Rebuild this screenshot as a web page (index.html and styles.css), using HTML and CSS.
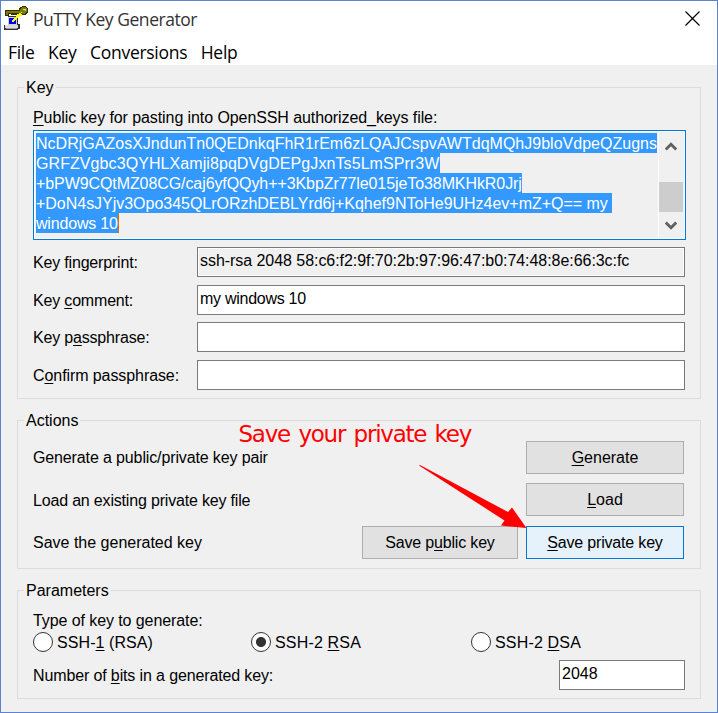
FILE: index.html
```html
<!DOCTYPE html>
<html lang="en">
<head>
<meta charset="utf-8">
<title>PuTTY Key Generator</title>
<link rel="stylesheet" href="styles.css">
</head>
<body>
<div class="window">
  <header class="titlebar">
    <svg class="app-icon" width="24" height="24" viewBox="0 0 24 24" shape-rendering="crispEdges">
      <path d="M1 4H15V2H16V1H18V0H22V1H23V2H24V7H23V8H22V9H18V8H13V9H7V8H5V10H1Z" fill="#303000"/>
      <path d="M2 5H16V3H17V2H18V1H22V2H23V6H22V7H21V8H18V7H4V9H2Z" fill="#7c7c00"/>
      <path d="M19 3H22V5H21V4H19Z" fill="#d8d8b0"/>
      <path d="M4 10H14V18H16V23H14V24H0V19H4Z" fill="#303030"/>
      <path d="M4 11H13V19H4Z" fill="#d0d0d0"/>
      <path d="M5 12H12V18H5Z" fill="#0000f0"/>
      <path d="M1 19H14V22H1Z" fill="#dcdcdc"/>
      <path d="M2 22H13V23H2Z" fill="#a0a0a0"/>
      <path d="M17 6H18V7H17V9H18V10H16V11H14V12H13V13H12V14H11V15H10V16H8V14H9V13H10V12H11V11H12V9H14V8H15V7H17Z" fill="#ff0"/>
    </svg>
    <span class="title">PuTTY Key Generator</span>
    <svg class="close" width="15" height="15" viewBox="0 0 15 15"><path d="M.5 .5L14.5 14.5M14.5 .5L.5 14.5" stroke="#000" stroke-width="1.2"/></svg>
  </header>
  <nav class="menu"><span>File</span><span>Key</span><span>Conversions</span><span>Help</span></nav>
  <main class="panel">
    <section class="group key-group">
      <h2 class="legend">Key</h2>
      <div class="label key-label snug"><u>P</u>ublic key for pasting into OpenSSH authorized_keys file:</div>
      <div class="textarea">
        <div class="lines">
          <div><span class="sel first">NcDRjGAZosXJndunTn0QEDnkqFhR1rEm6zLQAJCspvAWTdqMQhJ9bloVdpeQZugns</span></div>
          <div><span class="sel wide">GRFZVgbc3QYHLXamji8pqDVgDEPgJxnTs5LmSPrr3W</span></div>
          <div><span class="sel snug">+bPW9CQtMZ08CG/caj6yfQQyh++3KbpZr77le015jeTo38MKHkR0Jrj</span></div>
          <div><span class="sel fourth">+DoN4sJYjv3Opo345QLrORzhDEBLYrd6j+Kqhef9NToHe9UHz4ev+mZ+Q== my </span></div>
          <div><span class="sel caret tighter">windows 10</span></div>
        </div>
        <div class="scrollbar">
          <svg width="12" height="9" viewBox="0 0 12 9"><path d="M.8 7.5L6 2.3L11.2 7.5" fill="none" stroke="#606060" stroke-width="2.8"/></svg>
          <div class="thumb"></div>
          <svg width="12" height="9" viewBox="0 0 12 9"><path d="M.8 1.5L6 6.7L11.2 1.5" fill="none" stroke="#606060" stroke-width="2.8"/></svg>
        </div>
      </div>
      <div class="fields">
        <div class="label tighter">Key f<u>i</u>ngerprint:</div><div class="field readonly close-fit">ssh-rsa 2048 58:c6:f2:9f:70:2b:97:96:47:b0:74:48:8e:66:3c:fc</div>
        <div class="label tighter">Key <u>c</u>omment:</div><div class="field tightest">my windows 10</div>
        <div class="label tighter">Key p<u>a</u>ssphrase:</div><div class="field"></div>
        <div class="label snug">C<u>o</u>nfirm passphrase:</div><div class="field"></div>
      </div>
    </section>
    <section class="group actions-group">
      <h2 class="legend">Actions</h2>
      <div class="action"><span class="label tight">Generate a public/private key pair</span><span class="button"><u>G</u>enerate</span></div>
      <div class="action low"><span class="label tighter">Load an existing private key file</span><span class="button"><u>L</u>oad</span></div>
      <div class="action"><span class="label">Save the generated key</span><span class="button public tighter">Save p<u>u</u>blic key</span><span class="button hot tighter"><u>S</u>ave private key</span></div>
      <div class="note">Save your private key</div>
      <svg class="arrow" width="110" height="65" viewBox="0 0 110 65"><path d="M0 0.500L1 0L89 47L93 42.500L107.500 63L82 60.500L85.500 55.500Z" fill="red"/></svg>
    </section>
    <section class="group params-group">
      <h2 class="legend">Parameters</h2>
      <div class="label type-label snug">Type of key to generate:</div>
      <div class="radios">
        <div class="radio"><i class="dot"></i><span class="wide">SSH-<u>1</u> (RSA)</span></div>
        <div class="radio"><i class="dot on"></i><span class="wider">SSH-2 <u>R</u>SA</span></div>
        <div class="radio"><i class="dot"></i><span class="wider">SSH-2 <u>D</u>SA</span></div>
      </div>
      <div class="bits"><span class="label tight">Number of <u>b</u>its in a generated key:</span><span class="field">2048</span></div>
    </section>
  </main>
</div>
</body>
</html>
```
FILE: styles.css
```css
* { box-sizing: border-box; }
body { margin: 0; font: 16px/20px "Liberation Sans", Arial, sans-serif; color: #000; }
.window { width: 718px; height: 713px; border: 1px solid #5b84d0; background: #f0f0f0; overflow: hidden; }
.titlebar { display: flex; height: 36px; background: #fff; padding: 5px 17px 0 3px; font: 17.500px/27px "Open Sans", "Noto Sans", sans-serif; color: #333; }
.title { margin-left: 5px; letter-spacing: -.45px; }
.close { margin: 5px 0 0 auto; }
.menu { display: flex; height: 28px; gap: 13.600px; padding-left: 7px; background: #fff; font: 17.500px/30px "Open Sans", "Noto Sans", sans-serif; letter-spacing: -.3px; }
.panel { padding: 22px 16px 0; }
.group { position: relative; border: 1px solid #dcdcdc; padding: 0 15px; width: 684px; }
.legend { width: max-content; height: 20px; margin: -11px 0 0 -9px; padding: 0 2px; background: #f0f0f0; font: inherit; line-height: 22px; }
.key-group { height: 312px; }
.key-label { margin-top: 11px; height: 22px; }
.textarea { display: flex; width: 653px; height: 110px; border: 1px solid #0078d7; box-shadow: inset 0 0 0 1px #fff; padding: 2px; }
.lines { width: 622px; color: #fff; }
.lines div { height: 20px; }
.sel { display: inline-block; height: 20px; line-height: 22px; background: #3399ff; white-space: pre; vertical-align: top; }
.first { letter-spacing: .014px; }
.fourth { letter-spacing: -.025px; }
.caret { border-right: 1px solid #d07000; }
.scrollbar { width: 25px; border-left: 1px solid #fff; display: flex; flex-direction: column; align-items: center; padding-top: 9px; }
.thumb { width: 24px; height: 30px; margin: 31px 0 9px; background: #cdcdcd; flex: none; }
.scrollbar svg { flex: none; }
.fields { display: grid; grid-template-columns: 164px 488px; grid-template-rows: 30px 30px 30px 30px; row-gap: 7.6px; margin-top: 7px; }
.fields .label { padding-top: 6px; }
.field { border: 1px solid #7a7a7a; background: #fff; padding: 3px 2px 0; height: 30px; }
.readonly { background: #f0f0f0; box-shadow: inset 0 0 0 1px #fff; }
.actions-group { height: 149px; margin-top: 21px; }
.action { display: flex; align-items: center; height: 33px; margin-bottom: 9px; margin-right: 1px; }
.low { margin-bottom: 10px; }
.low .label { padding-top: 2px; }
.legend + .action { margin-top: 11px; }
.button { width: 158px; height: 33px; border: 1px solid #adadad; background: #e1e1e1; text-align: center; line-height: 31px; margin-left: auto; }
.public { width: 156px; }
.hot { border-color: #0078d7; background: #e5f1fb; margin-left: 8px; }
.note { position: absolute; left: 220.500px; top: -2px; color: red; font: 23px/30px "DejaVu Sans", sans-serif; letter-spacing: -1.250px; word-spacing: 2.400px; white-space: nowrap; }
.arrow { position: absolute; left: 401px; top: 44px; }
.params-group { height: 109px; margin-top: 21px; }
.type-label { margin-top: 11px; height: 21px; }
.radios { display: grid; grid-template-columns: 218px 220px 1fr; }
.radio { display: flex; gap: 4px; line-height: 21px; }
.dot { width: 20px; height: 20px; border: 1px solid #333; border-radius: 50%; background: #fff; }
.on { background: radial-gradient(circle, #333 0 4.6px, #fff 5.4px); }
.bits { display: flex; justify-content: space-between; margin-top: 7px; }
.bits .label { padding-top: 6px; }
.bits .field { width: 126px; }
.wider { letter-spacing: .17px; }
.wide { letter-spacing: .08px; }
.close-fit { letter-spacing: -.05px; }
.snug { letter-spacing: -.085px; }
.tight { letter-spacing: -.13px; }
.tighter { letter-spacing: -.18px; }
.tightest { letter-spacing: -.27px; }
u { text-underline-offset: 2px; text-decoration-thickness: 1px; }
```
